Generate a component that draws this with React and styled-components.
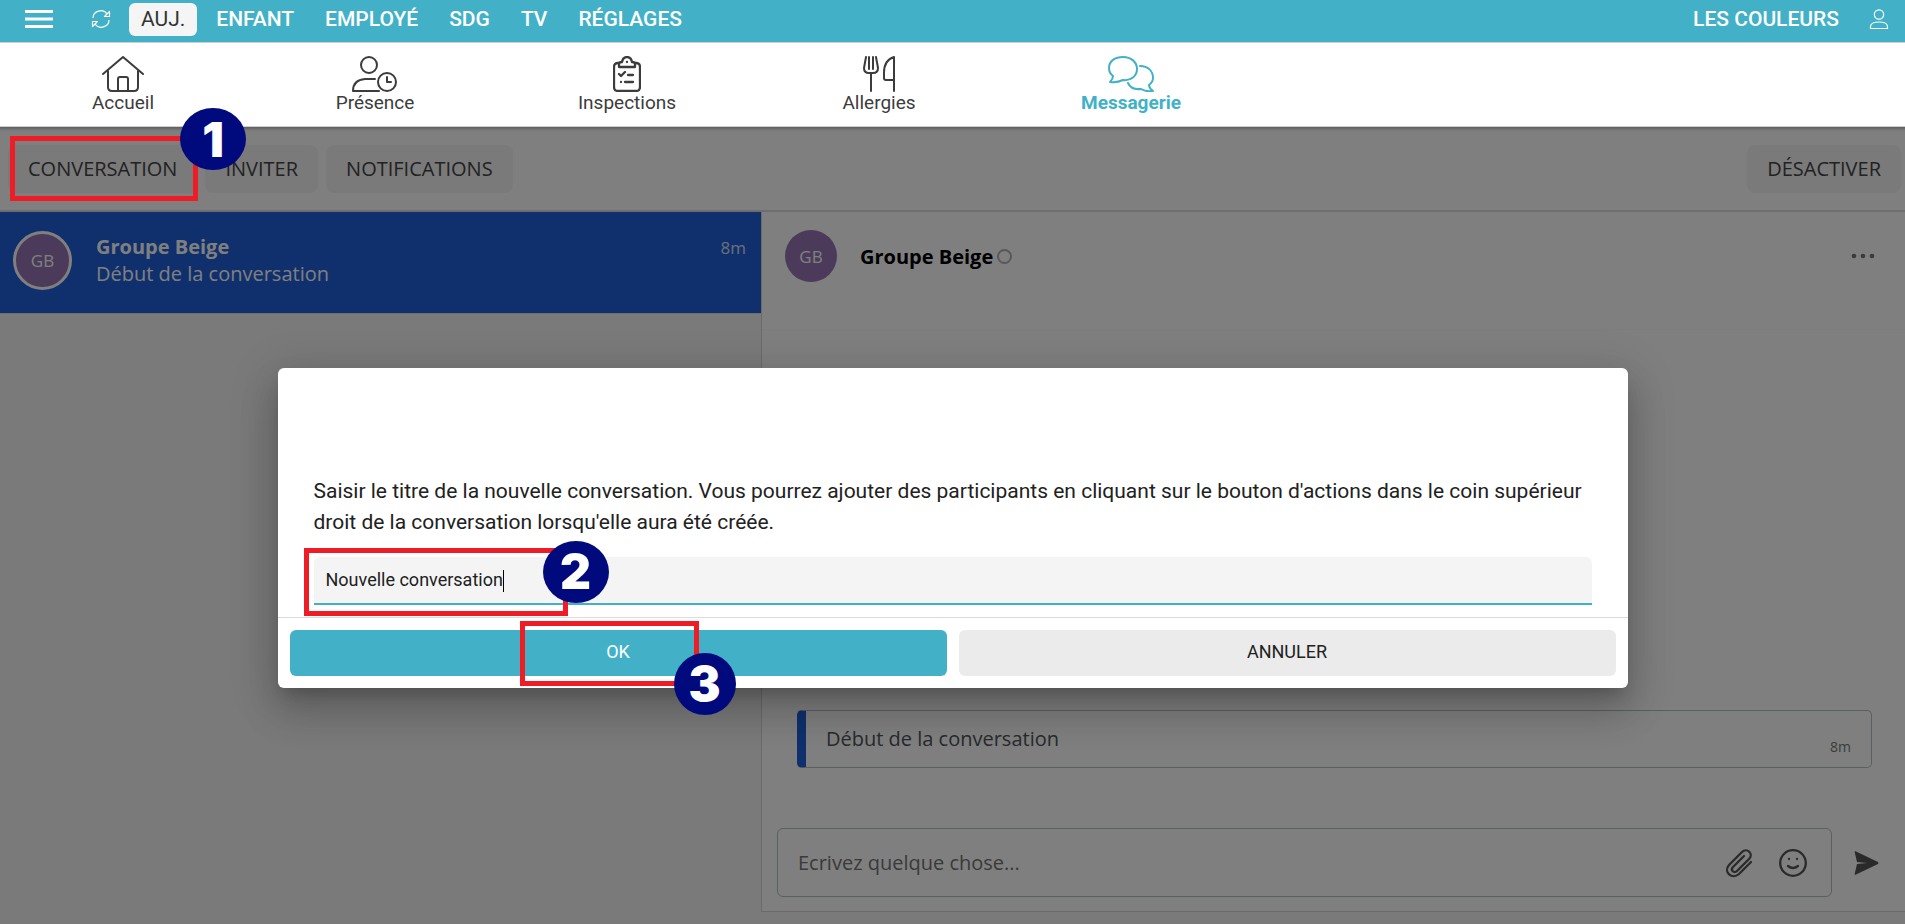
import React from 'react'
import styled, { createGlobalStyle, css } from 'styled-components'

const GlobalStyle = createGlobalStyle`
  * {
    box-sizing: border-box;
  }
  body {
    margin: 0;
    background: #f5f5f5;
    color: #212121;
    font-family: 'Open Sans', 'Noto Sans', sans-serif;
    font-size: 20px;
  }
  button,
  input {
    font: inherit;
    color: inherit;
    border: none;
    outline: none;
    margin: 0;
  }
  button {
    cursor: pointer;
  }
`

const teal = '#42b1c7'
const roboto = "Roboto, 'Liberation Sans', sans-serif"

const Page = styled.div`
  display: flex;
  flex-direction: column;
  min-height: 100vh;
`

const TopBar = styled.header`
  display: flex;
  align-items: center;
  height: 43px;
  padding: 0 16px 4px;
  background: ${teal};
  border-bottom: 1px solid #cfcfcf;
  color: #fff;
  font-family: ${roboto};
  font-size: 21px;
  font-weight: 500;
`

const IconButton = styled.button`
  display: flex;
  align-items: center;
  justify-content: center;
  padding: 0;
  background: transparent;
  svg {
    display: block;
  }
`

const MenuButton = styled(IconButton)`
  width: 46px;
`

const SyncButton = styled(IconButton)`
  width: 32px;
  margin: 0 12px 0 23px;
`

const Tabs = styled.nav`
  display: flex;
  gap: 7px;
  flex: 1;
`

const Tab = styled.a`
  padding: 0 12px;
  line-height: 33px;
  border-radius: 6px;
  color: #fff;
  text-decoration: none;
  ${props =>
    props.$active &&
    css`
      background: #f5f5f5;
      color: #333;
      font-weight: 400;
    `}
`

const Account = styled.span`
  margin-right: 30px;
`

const SubNav = styled.nav`
  display: flex;
  gap: 6px;
  height: 84px;
  padding-top: 13px;
  background: #fff;
  border-bottom: 1px solid #cfcfcf;
  font-family: ${roboto};
  font-size: 19px;
`

const SubNavItem = styled.a`
  display: flex;
  flex-direction: column;
  align-items: center;
  width: 246px;
  line-height: 22px;
  color: ${props => (props.$active ? teal : '#3c3c3c')};
  font-weight: ${props => (props.$active ? 700 : 400)};
  text-decoration: none;
`

const Main = styled.main`
  position: relative;
  display: flex;
  flex-direction: column;
  flex: 1;
`

const Toolbar = styled.div`
  display: flex;
  align-items: center;
  gap: 8px;
  height: 85px;
  padding: 0 4px 0 8px;
  background: #fff;
  border-bottom: 2px solid #dcdcdc;
`

const ToolButton = styled.button`
  height: 48px;
  padding: 0 20px;
  border-radius: 8px;
  background: #f5f5f5;
  color: #444;
  &:last-child {
    margin-left: auto;
  }
`

const Panes = styled.div`
  display: flex;
  flex: 1;
  padding-bottom: 12px;
`

const List = styled.aside`
  width: 40%;
  margin-right: -1px;
`

const Conversation = styled.a`
  display: flex;
  align-items: center;
  height: 102px;
  padding: 0 15px 5px 13px;
  margin-right: 1px;
  background: #1e60da;
  border-bottom: 1px solid #dcdcdc;
  color: #fff;
  line-height: 27px;
  text-decoration: none;
`

const Avatar = styled.span`
  display: flex;
  align-items: center;
  justify-content: center;
  width: ${props => (props.$ring ? 59 : 52)}px;
  height: ${props => (props.$ring ? 59 : 52)}px;
  border: ${props => (props.$ring ? '3px solid #fff' : 'none')};
  border-radius: 50%;
  background: #9874b4;
  color: #fff;
  font-size: 17px;
`

const Summary = styled.span`
  display: flex;
  flex-direction: column;
  flex: 1;
  margin-left: 24px;
`

const Time = styled.time`
  align-self: ${props => (props.$top ? 'flex-start' : 'flex-end')};
  margin-top: ${props => (props.$top ? 22 : 0)}px;
  font-size: ${props => (props.$top ? 17 : 14)}px;
  opacity: 0.8;
`

const Thread = styled.section`
  display: flex;
  flex-direction: column;
  flex: 1;
  background: #fff;
  border: 1px solid #d6d6d6;
  border-width: 0 0 1px 1px;
`

const ThreadHeader = styled.header`
  display: flex;
  align-items: center;
  height: 118px;
  padding: 0 30px 29px 23px;
  border-bottom: 1px solid #fafafa;
`

const ThreadName = styled.h1`
  margin: 0 4px 0 23px;
  color: #000;
  font-size: 20px;
`

const Status = styled.span`
  width: 15px;
  height: 15px;
  border: 2px solid #b0b0b0;
  border-radius: 50%;
`

const MoreButton = styled(IconButton)`
  margin-left: auto;
  color: #777;
`

const Messages = styled.div`
  display: flex;
  flex-direction: column;
  justify-content: flex-end;
  flex: 1;
  padding: 0 33px 60px 35px;
`

const Message = styled.article`
  display: flex;
  justify-content: space-between;
  height: 58px;
  padding: 0 20px 6px;
  border: 1px solid #b4bec3;
  border-left: 9px solid #1e60da;
  border-radius: 5px;
  color: #50565a;
  line-height: 56px;
  time {
    line-height: 28px;
  }
`

const Composer = styled.form`
  display: flex;
  align-items: center;
  padding: 0 26px 14px 15px;
`

const ComposerField = styled.div`
  display: flex;
  align-items: center;
  gap: 26px;
  flex: 1;
  height: 69px;
  margin-right: 22px;
  padding: 0 24px 0 20px;
  border: 1px solid #b4bec3;
  border-radius: 6px;
  input {
    flex: 1;
    min-width: 0;
    padding: 0;
    background: transparent;
  }
  input::placeholder {
    color: #757575;
    opacity: 1;
  }
`

const Overlay = styled.div`
  position: absolute;
  inset: 0;
  display: flex;
  align-items: center;
  justify-content: center;
  padding: 4px 20px 0;
  background: rgba(0, 0, 0, 0.5);
  box-shadow: inset 0 5px 3px -3px rgba(0, 0, 0, 0.25);
`

const Dialog = styled.form`
  width: 100%;
  max-width: 1350px;
  background: #fff;
  border-radius: 6px;
  font-family: ${roboto};
  box-shadow: 0 11px 15px -7px rgba(0, 0, 0, 0.2),
    0 24px 38px 3px rgba(0, 0, 0, 0.14), 0 9px 46px 8px rgba(0, 0, 0, 0.12);
`

const DialogBody = styled.div`
  padding: 108px 36px 12px;
  label {
    display: block;
    margin-bottom: 19px;
    font-size: 21px;
    line-height: 31px;
  }
`

const InputRow = styled.div`
  position: relative;
`

const TitleInput = styled.input`
  display: block;
  width: 100%;
  height: 48px;
  padding: 0 12px;
  background: #f4f4f4;
  border-bottom: 2px solid ${teal};
  border-radius: 6px 6px 0 0;
  caret-color: transparent;
  font-size: 18px;
`

const Caret = styled.span`
  position: absolute;
  top: 13px;
  left: 189px;
  width: 1px;
  height: 22px;
  background: #000;
`

const DialogActions = styled.div`
  position: relative;
  display: flex;
  gap: 12px;
  padding: 12px;
  border-top: 1px solid #dcdcdc;
`

const DialogButton = styled.button`
  flex: 1;
  height: 46px;
  padding: 0 12px 2px;
  border-radius: 6px;
  background: ${props => (props.$primary ? teal : '#ebebeb')};
  color: ${props => (props.$primary ? '#fff' : '#212121')};
  font-size: 18px;
`

// Numbered walkthrough markers drawn over the interface
const Marker = styled.div`
  position: absolute;
  top: ${props => props.$top}px;
  left: ${props => props.$left}px;
  width: ${props => props.$width}px;
  height: ${props => props.$height}px;
  border: 5px solid #ee1c24;
  pointer-events: none;
`

const Step = styled.span`
  position: absolute;
  top: ${props => props.$top}px;
  left: ${props => props.$left}px;
  display: flex;
  align-items: center;
  justify-content: center;
  width: ${props => props.$size}px;
  height: 62px;
  border-radius: 50%;
  background: #000a7d;
  color: #fff;
  font-family: Inter, 'Liberation Sans', sans-serif;
  font-size: 48px;
  font-weight: 900;
`

const NavSvg = props => (
  <svg
    height="36"
    fill="none"
    stroke="currentColor"
    strokeWidth="2"
    strokeLinecap="round"
    strokeLinejoin="round"
    aria-hidden="true"
    {...props}
  />
)

const HomeIcon = () => (
  <NavSvg width="42" viewBox="0 0 42 36">
    <path d="M1 18 21 1l20 17M6 15v16q0 4 4 4h22q4 0 4-4V15M16 35V23q0-2 2-2h6q2 0 2 2v12" />
  </NavSvg>
)

const PresenceIcon = () => (
  <NavSvg width="46" viewBox="0 0 46 36">
    <circle cx="17" cy="9" r="8" />
    <path d="M23 23H13Q1 24 1 35h26" />
    <circle cx="35" cy="26" r="9" />
    <path d="M35 21v5h4" />
  </NavSvg>
)

const InspectionsIcon = () => (
  <NavSvg width="28" viewBox="0 0 28 36" strokeWidth="2.3">
    <path d="M6 7H5Q1 7 1 11v20q0 4 4 4h18q4 0 4-4V11q0-4-4-4h-1" />
    <path d="M6 11V8q0-2 3-2 1-5 5-5t5 5q3 0 3 2v3zM14 6h.01M6 18l2 2 4-4M15 19h5M8 26h.01M12 26h8" />
  </NavSvg>
)

const AllergiesIcon = () => (
  <NavSvg width="32" viewBox="0 0 32 36">
    <path d="M3 1 1 12q0 5 5 5h4q5 0 5-5L13 1M6 1v12M10 1v12M8 17v18M31 35V1q-10 3-10 16v5q0 2 2 2h8" />
  </NavSvg>
)

const MessagesIcon = () => (
  <NavSvg width="46" viewBox="0 0 46 36">
    <path d="M5 20Q1 17 1 12C1 5 7 1 15 1s14 5 14 12-6 12-14 11q-6 3-13 2 3-3 3-6z" />
    <path d="M32 10c8 0 13 5 13 12q0 4-4 7 0 3 4 6-7 1-12-2-10 1-13-6" />
  </NavSvg>
)

const sections = [
  { label: 'Accueil', Icon: HomeIcon },
  { label: 'Présence', Icon: PresenceIcon },
  { label: 'Inspections', Icon: InspectionsIcon },
  { label: 'Allergies', Icon: AllergiesIcon },
  { label: 'Messagerie', Icon: MessagesIcon, active: true },
]

const tabs = ['AUJ.', 'ENFANT', 'EMPLOYÉ', 'SDG', 'TV', 'RÉGLAGES']

function Header() {
  return (
    <>
      <TopBar>
        <MenuButton type="button" aria-label="Menu">
          <svg width="28" height="18" stroke="currentColor" strokeWidth="3">
            <path d="M0 1.5h28M0 9h28M0 16.5h28" />
          </svg>
        </MenuButton>
        <SyncButton type="button" aria-label="Actualiser">
          <svg
            width="20"
            height="18"
            viewBox="0 0 20 18"
            fill="none"
            stroke="currentColor"
            strokeWidth="1.2"
            strokeLinejoin="round"
          >
            <path d="M2 8C2 1 12-2 16 4M18.5 1.5v5h-5zM18 10c0 7-10 10-14 4M1.5 16.5v-5h5z" />
          </svg>
        </SyncButton>
        <Tabs>
          {tabs.map((tab, i) => (
            <Tab href="#" key={tab} $active={i === 0}>
              {tab}
            </Tab>
          ))}
        </Tabs>
        <Account>LES COULEURS</Account>
        <IconButton type="button" aria-label="Compte">
          <svg
            width="20"
            height="21"
            viewBox="0 0 20 21"
            fill="none"
            stroke="currentColor"
            strokeWidth="1.2"
          >
            <circle cx="10" cy="5.5" r="4.7" />
            <path d="M1.5 19.5v-2c0-6 17-6 17 0v2z" />
          </svg>
        </IconButton>
      </TopBar>
      <SubNav>
        {sections.map(({ label, Icon, active }) => (
          <SubNavItem href="#" key={label} $active={active}>
            <Icon />
            {label}
          </SubNavItem>
        ))}
      </SubNav>
    </>
  )
}

function ConversationThread() {
  return (
    <Thread>
      <ThreadHeader>
        <Avatar>GB</Avatar>
        <ThreadName>Groupe Beige</ThreadName>
        <Status />
        <MoreButton type="button" aria-label="Actions">
          <svg width="24" height="6" fill="currentColor">
            <circle cx="3" cy="3" r="2.3" />
            <circle cx="12" cy="3" r="2.3" />
            <circle cx="21" cy="3" r="2.3" />
          </svg>
        </MoreButton>
      </ThreadHeader>
      <Messages>
        <Message>
          <span>Début de la conversation</span>
          <Time>8m</Time>
        </Message>
      </Messages>
      <Composer>
        <ComposerField>
          <input aria-label="Message" placeholder="Ecrivez quelque chose..." />
          <IconButton type="button" aria-label="Joindre un fichier">
            <svg
              width="28"
              height="30"
              viewBox="0 0 28 30"
              fill="none"
              stroke="#555"
              strokeWidth="2.3"
              strokeLinecap="round"
            >
              <path d="m26 14-12 12c-7 6-16-2-10-9L17 4c5-5 12 2 7 7L12 23c-3 3-7-1-4-4L19 8" />
            </svg>
          </IconButton>
          <IconButton type="button" aria-label="Émoticônes">
            <svg
              width="28"
              height="28"
              viewBox="0 0 28 28"
              fill="none"
              stroke="#555"
              strokeWidth="2.3"
              strokeLinecap="round"
            >
              <circle cx="14" cy="14" r="12.8" />
              <path d="M9 17q5 4 10 0M10 10h.01M18 10h.01" />
            </svg>
          </IconButton>
        </ComposerField>
        <IconButton aria-label="Envoyer">
          <svg width="25" height="24" viewBox="0 0 25 24" fill="#555">
            <path d="M1.5.2 24 11q1 1 0 2L1.5 23.8Q.5 24 .7 22.8L3 13l10-1L3 11 .7 1.2Q.5 0 1.5.2z" />
          </svg>
        </IconButton>
      </Composer>
    </Thread>
  )
}

function NewConversation() {
  return (
    <Dialog role="dialog">
      <DialogBody>
        <label htmlFor="title">
          Saisir le titre de la nouvelle conversation. Vous pourrez ajouter des
          participants en cliquant sur le bouton d'actions dans le coin
          supérieur droit de la conversation lorsqu'elle aura été créée.
        </label>
        <InputRow>
          <TitleInput id="title" defaultValue="Nouvelle conversation" autoFocus />
          <Caret />
          <Marker $top={-9} $left={-10} $width={264} $height={68} />
          <Step $top={-16} $left={229} $size={66}>
            2
          </Step>
        </InputRow>
      </DialogBody>
      <DialogActions>
        <DialogButton type="button" $primary>
          OK
        </DialogButton>
        <DialogButton type="button">ANNULER</DialogButton>
        <Marker $top={3} $left={242} $width={179} $height={65} />
        <Step $top={35} $left={396} $size={62}>
          3
        </Step>
      </DialogActions>
    </Dialog>
  )
}

function App() {
  return (
    <Page>
      <GlobalStyle />
      <Header />
      <Main>
        <Toolbar>
          <ToolButton type="button">CONVERSATION</ToolButton>
          <ToolButton type="button">INVITER</ToolButton>
          <ToolButton type="button">NOTIFICATIONS</ToolButton>
          <ToolButton type="button">DÉSACTIVER</ToolButton>
        </Toolbar>
        <Panes>
          <List>
            <Conversation href="#">
              <Avatar $ring>GB</Avatar>
              <Summary>
                <strong>Groupe Beige</strong>
                <span>Début de la conversation</span>
              </Summary>
              <Time $top>8m</Time>
            </Conversation>
          </List>
          <ConversationThread />
        </Panes>
        <Overlay>
          <NewConversation />
        </Overlay>
        <Marker $top={9} $left={10} $width={188} $height={65} />
        <Step $top={-19} $left={180} $size={66}>
          1
        </Step>
      </Main>
    </Page>
  )
}

export default App
